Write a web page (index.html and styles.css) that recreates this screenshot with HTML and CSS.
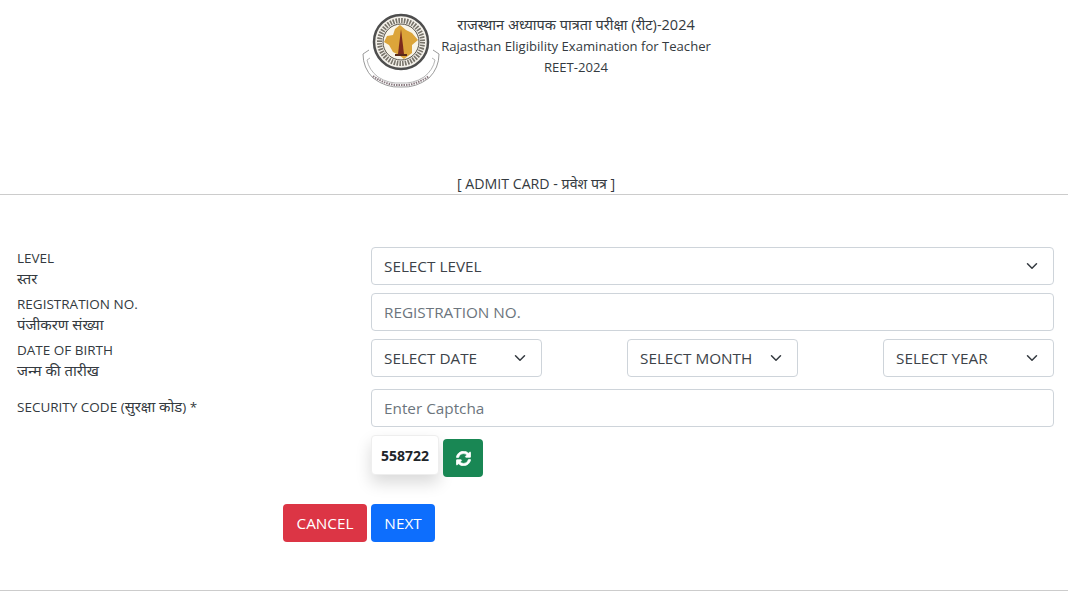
FILE: index.html
```html
<!DOCTYPE html>
<html lang="hi">
<head>
<meta charset="utf-8">
<title>REET-2024 Admit Card</title>
<link rel="stylesheet" href="styles.css">
</head>
<body>
<header class="brand">
  <svg class="logo" viewBox="0 0 78 78" aria-hidden="true">
    <path d="M7 38 L1 42 Q1 56 11 66 Q24 76 39 75 Q54 76 67 66 Q77 56 77 42 L71 38" fill="none" stroke="#9a9a9a" stroke-width="1"/>
    <path d="M8 46 L5 48 Q7 58 16 65 Q27 72 39 71 Q51 72 62 65 Q71 58 73 48 L70 46" fill="none" stroke="#b5b5b5" stroke-width="1"/>
    <path d="M11 64 Q25 74 39 73 Q53 74 67 64" fill="none" stroke="#8a7a80" stroke-width="2" stroke-dasharray="1.5 1"/>
    <circle cx="39" cy="30" r="27" fill="#f4f1ea" stroke="#4e4e4e" stroke-width="2.5"/>
    <circle cx="39" cy="30" r="21.5" fill="none" stroke="#77736a" stroke-width="5" stroke-dasharray="1.6 1.2"/>
    <circle cx="39" cy="30" r="18" fill="#f8f4e8" stroke="#55514a" stroke-width="1"/>
    <path d="M38 13 L44 18 L50 21 L56 28 L50 33 L50 41 L42 47 L37 43 L31 40 L27 33 L22 30 L25 24 L31 23 L33 17 Z" fill="#dca53a"/>
    <path d="M39 17 L36 42 L42 42 Z" fill="#7c2a1c"/>
    <path d="M33 43 H45" stroke="#5a2a18" stroke-width="2"/>
  </svg>
  <div class="brand-text">
    <div class="brand-hi">राजस्थान अध्यापक पात्रता परीक्षा (रीट)-2024</div>
    <div>Rajasthan Eligibility Examination for Teacher</div>
    <div>REET-2024</div>
  </div>
</header>

<h1 class="page-title">[ ADMIT CARD - प्रवेश पत्र ]</h1>

<main class="form">
  <div class="row">
    <div class="label">LEVEL<br><span class="hi">स्तर</span></div>
    <div class="control select">
      <span>SELECT LEVEL</span>
      <svg class="chev" viewBox="0 0 16 16"><path d="M2 5l6 6 6-6" fill="none" stroke="#343a40" stroke-width="2" stroke-linecap="round" stroke-linejoin="round"/></svg>
    </div>
  </div>
  <div class="row">
    <div class="label">REGISTRATION NO.<br><span class="hi">पंजीकरण संख्या</span></div>
    <input class="control field" type="text" placeholder="REGISTRATION NO.">
  </div>
  <div class="row">
    <div class="label">DATE OF BIRTH<br><span class="hi">जन्म की तारीख</span></div>
    <div class="dob">
      <div class="control select">
        <span>SELECT DATE</span>
        <svg class="chev" viewBox="0 0 16 16"><path d="M2 5l6 6 6-6" fill="none" stroke="#343a40" stroke-width="2" stroke-linecap="round" stroke-linejoin="round"/></svg>
      </div>
      <div class="control select">
        <span>SELECT MONTH</span>
        <svg class="chev" viewBox="0 0 16 16"><path d="M2 5l6 6 6-6" fill="none" stroke="#343a40" stroke-width="2" stroke-linecap="round" stroke-linejoin="round"/></svg>
      </div>
      <div class="control select">
        <span>SELECT YEAR</span>
        <svg class="chev" viewBox="0 0 16 16"><path d="M2 5l6 6 6-6" fill="none" stroke="#343a40" stroke-width="2" stroke-linecap="round" stroke-linejoin="round"/></svg>
      </div>
    </div>
  </div>
  <div class="row row-captcha">
    <div class="label label-single">SECURITY CODE (<span class="hi">सुरक्षा कोड</span>) *</div>
    <div class="captcha-col">
      <input class="control field" type="text" placeholder="Enter Captcha">
      <div class="captcha-line">
        <div class="captcha-code">558722</div>
        <button class="btn btn-refresh" type="button" aria-label="Refresh">
          <svg class="sync" viewBox="0 0 512 512" width="15" height="15"><path d="M370.7 133.3C339.5 104 298.9 88 255.8 88c-77.500 .1-144.300 53.200-162.800 126.900-1.300 5.400-6.100 9.100-11.600 9.100H24.100c-7.500 0-13.200-6.800-11.800-14.200C33.900 94.900 134.800 8 256 8c66.400 0 126.800 26.100 171.300 68.700L463 41c15.100-15.100 41-4.400 41 17V192c0 13.300-10.700 24-24 24H345.900c-21.400 0-32.100-25.900-17-41l41.800-41.700zM32 296h134.100c21.400 0 32.100 25.900 17 41l-41.800 41.800c31.300 29.300 71.800 45.300 114.900 45.200 77.400-.1 144.300-53.100 162.800-126.800 1.300-5.400 6.100-9.100 11.600-9.100h57.300c7.500 0 13.200 6.800 11.800 14.200C478.100 417.100 377.200 504 256 504c-66.400 0-126.800-26.100-171.300-68.700L49 471c-15.100 15.100-41 4.400-41-17V320c0-13.300 10.700-24 24-24z"/></svg>
        </button>
      </div>
    </div>
  </div>
  <div class="actions">
    <button class="btn btn-cancel" type="button">CANCEL</button>
    <button class="btn btn-next" type="button">NEXT</button>
  </div>
</main>
<div class="footer-rule"></div>
</body>
</html>
```
FILE: styles.css
```css
* { box-sizing: border-box; }
html, body { height: 100%; }
body {
  margin: 0;
  background: #fff;
  color: #343a40;
  font-family: "Open Sans", "Noto Sans", "Noto Sans Devanagari", "Lohit Devanagari", "DejaVu Sans", sans-serif;
  font-size: 14px;
  line-height: 21px;
  overflow: hidden;
}
.brand {
  display: flex;
  align-items: flex-start;
  height: 171px;
  padding: 12px 0 0 362px;
}
.logo { width: 78px; height: 78px; flex: none; }
.brand-text {
  width: 272px;
  padding-top: 2px;
  text-align: center;
  font-size: 13.1px;
  white-space: nowrap;
}
.brand-hi { font-size: 14.5px; margin-bottom: 1px; }
.page-title {
  margin: 0;
  height: 24px;
  padding: 2px 0 0 4px;
  border-bottom: 1px solid #ccc;
  text-align: center;
  font-size: 14.2px;
  font-weight: 400;
  line-height: 21px;
}
.form { padding: 52px 14px 0 17px; }
.row {
  display: grid;
  grid-template-columns: 354px 1fr;
  height: 42px;
  margin-bottom: 4px;
}
.row-captcha { height: auto; margin: 8px 0 0; }
.label { padding-top: 1px; font-size: 13.5px; line-height: 21px; }
.label-single { padding-top: 8px; }
.hi { font-size: 1.1em; line-height: 1; }
.control {
  height: 38px;
  width: 100%;
  padding: 0 12px;
  border: 1px solid #ced4da;
  border-radius: 4px;
  background: #fff;
  color: #3d4349;
  font: inherit;
  font-size: 15.3px;
}
.field::placeholder { color: #6c757d; opacity: 1; }
.select {
  display: flex;
  align-items: center;
  justify-content: space-between;
}
.chev { width: 12px; height: 12px; flex: none; margin-right: 3px; }
.dob { display: flex; justify-content: space-between; }
.dob .select { width: 171px; }
.captcha-col { display: flex; flex-direction: column; gap: 8px; }
.captcha-line { display: flex; gap: 4px; align-items: flex-start; }
.captcha-code {
  width: 68px;
  height: 40px;
  display: flex;
  align-items: center;
  justify-content: center;
  background: #fff;
  border-radius: 4px;
  border: 1px solid #eee;
  box-shadow: 0 8px 16px rgba(0,0,0,.15);
  color: #212529;
  font-weight: 700;
  font-size: 14px;
}
.btn {
  border: 0;
  border-radius: 4px;
  color: #fff;
  font: inherit;
  font-size: 15.3px;
  height: 38px;
}
.btn-refresh {
  width: 40px;
  margin-top: 4px;
  background: #198754;
  display: flex;
  align-items: center;
  justify-content: center;
  padding: 0;
}
.sync { fill: #fff; stroke: #fff; stroke-width: 24; }
.actions {
  display: flex;
  gap: 4px;
  margin: 27px 0 0 266px;
}
.btn-cancel { width: 84px; padding: 0; background: #dc3545; }
.btn-next { width: 64px; padding: 0; background: #0d6efd; }
.footer-rule {
  margin-top: 48px;
  border-top: 1px solid #ccc;
}
```
